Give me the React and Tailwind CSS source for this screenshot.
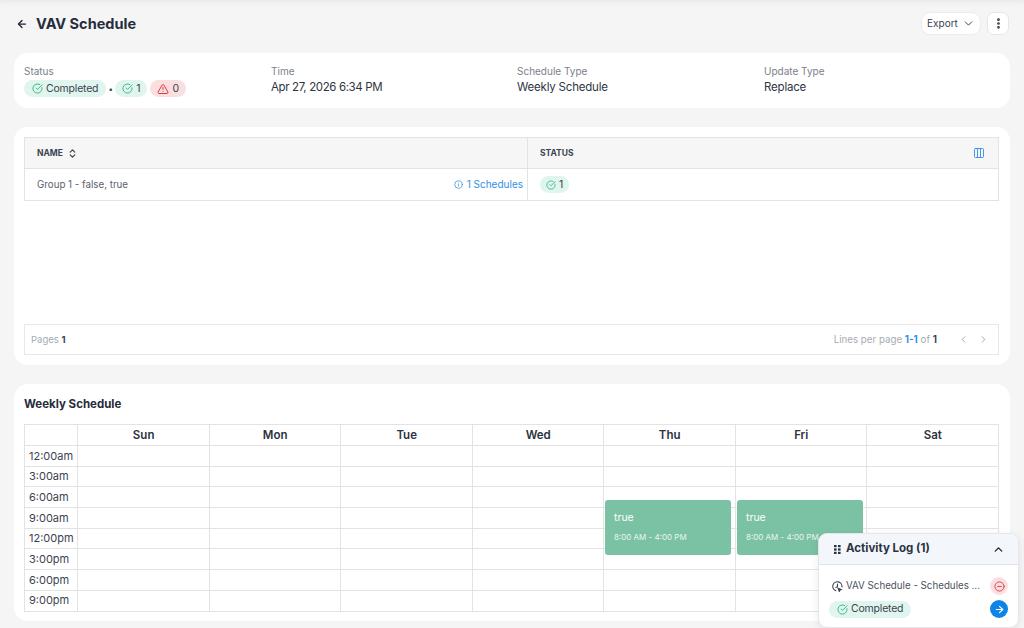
import { ArrowLeft, ArrowRight, ChevronDown, ChevronLeft, ChevronRight, ChevronUp, ChevronsUpDown, CircleCheckBig, Columns3, EllipsisVertical, Info, CircleMinus, TriangleAlert } from "lucide-react";

const days = ["Sun", "Mon", "Tue", "Wed", "Thu", "Fri", "Sat"];
const times = ["12:00am", "3:00am", "6:00am", "9:00am", "12:00pm", "3:00pm", "6:00pm", "9:00pm"];

function Pill({ red, className, children }) {
  const color = red ? "bg-[#fbdfe0]" : "bg-[#e0f5ee]";
  return (
    <span className={`flex h-[17px] items-center rounded-full text-[10.5px] tracking-[-0.2px] text-[#3a4350] ${color} ${className}`}>
      {children}
    </span>
  );
}

function Info2({ label, value, className, tight }) {
  return (
    <div className={className}>
      <p className="text-[10px] leading-[13px] text-[#7b818a]">{label}</p>
      <p className={`mt-[1px] text-[11.5px] leading-[17px] text-[#2f3642] ${tight ? "tracking-[-0.38px]" : "tracking-[-0.2px]"}`}>{value}</p>
    </div>
  );
}

function EventBlock({ className }) {
  return (
    <div className={`absolute top-[75px] z-10 h-[55px] rounded-[3px] bg-[#7bc2a5] pl-[9px] pt-[11px] text-white ${className}`}>
      <p className="text-[10.5px] leading-[13px]">true</p>
      <p className="mt-[7px] text-[8px] leading-[12px] text-[#e8f5ef]">8:00 AM - 4:00 PM</p>
    </div>
  );
}

function WeekGrid() {
  return (
    <div className="relative border-t border-l border-[#e3e3e3]">
      <div className="grid h-[21px] grid-cols-[53.4px_repeat(7,1fr)]">
        <div className="border-r border-b border-[#e3e3e3]" />
        {days.map((d) => (
          <div key={d} className="flex items-center justify-center border-r border-b border-[#e3e3e3] pt-[1px] text-[11.5px] font-semibold text-[#2c3340]">
            {d}
          </div>
        ))}
      </div>
      {times.map((t) => (
        <div key={t} className="grid h-[20.7px] grid-cols-[53.4px_repeat(7,1fr)]">
          <div className="flex items-center border-r border-b border-[#e3e3e3] pl-[4px] text-[11px] text-[#3c4350]">{t}</div>
          {days.map((d) => (
            <div key={d} className="border-r border-b border-[#e3e3e3]" />
          ))}
        </div>
      ))}
      <EventBlock className="left-[580px] w-[126px]" />
      <EventBlock className="left-[712px] w-[126px]" />
    </div>
  );
}

function GripIcon() {
  return (
    <svg viewBox="0 0 7 9" className="h-[9px] w-[7px] fill-[#2c3340]">
      <rect x="0" y="0" width="2.6" height="2.2" />
      <rect x="4" y="0" width="2.6" height="2.2" />
      <rect x="0" y="3.4" width="2.6" height="2.2" />
      <rect x="4" y="3.4" width="2.6" height="2.2" />
      <rect x="0" y="6.8" width="2.6" height="2.2" />
      <rect x="4" y="6.8" width="2.6" height="2.2" />
    </svg>
  );
}

function ClockTaskIcon() {
  return (
    <svg viewBox="0 0 12 12" fill="none" className="h-[11px] w-[11px] stroke-[#3a4350]" strokeWidth="1.2" strokeLinecap="round">
      <path d="M4.2 10.6A5 5 0 1 1 10.8 6.6" />
      <path d="M6 3.2V6L4.2 7.2" />
      <path d="M6.6 8l3.4 1.4-1.4.6-.6 1.4z" fill="#3a4350" />
    </svg>
  );
}

export default function App() {
  return (
    <div className="relative h-[628px] w-[1024px] overflow-hidden bg-[#f5f5f5] px-[14px] font-['Inter',sans-serif] shadow-[inset_0_6px_6px_-4px_rgba(0,0,0,0.06)]">
      <header className="flex h-[53px] items-center justify-between pb-[6px]">
        <div className="flex items-center gap-[8px]">
          <ArrowLeft className="ml-[2px] h-[12px] w-[12px] text-[#1f2633]" strokeWidth={2.5} />
          <h1 className="text-[14.5px] font-bold text-[#252c3c]">VAV Schedule</h1>
        </div>
        <div className="mr-[1px] flex items-center gap-[6px]">
          <button className="flex h-[23px] w-[60px] items-center justify-center gap-[4px] rounded-[9px] border border-[#ececec] bg-white text-[10px] text-[#3a4350]">
            Export
            <ChevronDown className="h-[13px] w-[13px]" strokeWidth={1.8} />
          </button>
          <button className="flex h-[23px] w-[22px] items-center justify-center rounded-[7px] border border-[#e6e6e6] bg-white text-[#2c3340]">
            <EllipsisVertical className="h-[13px] w-[13px]" strokeWidth={3} />
          </button>
        </div>
      </header>

      <section className="flex h-[55px] rounded-[14px] bg-white pl-[10px] pt-[12px]">
        <div className="w-[247px]">
          <p className="text-[10px] leading-[13px] text-[#7b818a]">Status</p>
          <div className="mt-[2px] flex items-center gap-[2px]">
            <Pill className="gap-[3px] px-[8px]">
              <CircleCheckBig className="h-[11px] w-[11px] text-[#33b583]" strokeWidth={2} />
              Completed
            </Pill>
            <span className="w-[5px] text-center text-[8px] text-[#3a4350]">•</span>
            <Pill className="gap-[3px] px-[7px]">
              <CircleCheckBig className="h-[11px] w-[11px] text-[#33b583]" strokeWidth={2} />1
            </Pill>
            <Pill red className="ml-[1px] gap-[3px] px-[7px]">
              <TriangleAlert className="h-[12px] w-[12px] text-[#dc3a42]" strokeWidth={2} />0
            </Pill>
          </div>
        </div>
        <Info2 label="Time" value="Apr 27, 2026 6:34 PM" className="w-[246px]" tight />
        <Info2 label="Schedule Type" value="Weekly Schedule" className="w-[247px]" />
        <Info2 label="Update Type" value="Replace" />
      </section>

      <section className="mt-[19px] h-[238px] rounded-[14px] bg-white pl-[10px] pr-[11px] pt-[10px]">
        <div className="border border-[#e3e3e3]">
          <div className="grid h-[30px] grid-cols-[503px_1fr] bg-[#f6f6f6]">
            <div className="flex items-center gap-[4px] border-r border-[#e3e3e3] pl-[12px] text-[8.5px] font-bold text-[#3a4350]">
              NAME
              <ChevronsUpDown className="h-[11px] w-[11px]" strokeWidth={2.6} />
            </div>
            <div className="flex items-center justify-between pl-[12px] pr-[13px] text-[8.5px] font-bold text-[#3a4350]">
              STATUS
              <Columns3 className="h-[12px] w-[12px] text-[#2f8fe6]" strokeWidth={1.8} />
            </div>
          </div>
          <div className="grid h-[32px] grid-cols-[503px_1fr] border-t border-[#e3e3e3]">
            <div className="flex items-center justify-between border-r border-[#e3e3e3] pl-[12px] pr-[4px]">
              <span className="pt-[1px] text-[9.75px] text-[#5a616b]">Group 1 - false, true</span>
              <span className="flex items-center gap-[4px] text-[10px] text-[#2f8fe6]">
                <Info className="h-[9px] w-[9px]" strokeWidth={2} />1 Schedules
              </span>
            </div>
            <div className="flex items-center pl-[12px]">
              <Pill className="gap-[3px] px-[6px]">
                <CircleCheckBig className="h-[10px] w-[10px] text-[#33b583]" strokeWidth={2} />1
              </Pill>
            </div>
          </div>
        </div>
        <div className="mt-[123px] flex h-[31px] items-center justify-between border border-[#e8e8e8] pl-[6px] pr-[9px]">
          <p className="pt-[1px] text-[9.5px] text-[#a6abb2]">
            Pages <span className="font-bold text-[#3a4350]">1</span>
          </p>
          <div className="flex items-center">
            <p className="pt-[1px] text-[9.75px] text-[#a6abb2]">
              Lines per page <span className="font-bold text-[#2f8fe6]">1-1</span> of <span className="font-bold text-[#3a4350]">1</span>
            </p>
            <ChevronLeft className="ml-[21px] h-[11px] w-[11px] text-[#9ba0a8]" strokeWidth={2} />
            <ChevronRight className="ml-[9px] h-[11px] w-[11px] text-[#9ba0a8]" strokeWidth={2} />
          </div>
        </div>
      </section>

      <section className="mt-[19px] h-[237px] rounded-[14px] bg-white pl-[10px] pr-[11px] pt-[13px]">
        <h2 className="h-[27px] text-[11.5px] leading-[14px] font-bold text-[#252c3c]">Weekly Schedule</h2>
        <WeekGrid />
      </section>

      <aside className="absolute top-[533px] right-[5px] z-20 h-[95px] w-[201px] overflow-hidden rounded-[9px] border border-[#e4e6ea] bg-white shadow-[0_2px_8px_rgba(0,0,0,0.08)]">
        <div className="flex h-[31px] items-center justify-between border-b border-[#dfe2e8] bg-[#f3f7fc] pl-[15px] pr-[13px]">
          <div className="flex items-center gap-[5px]">
            <GripIcon />
            <span className="text-[11.5px] font-bold text-[#2c3340]">Activity Log (1)</span>
          </div>
          <ChevronUp className="h-[13px] w-[13px] text-[#1f2633]" strokeWidth={2.5} />
        </div>
        <div className="pl-[10px] pr-[10px] pt-[12px]">
          <div className="flex items-center justify-between">
            <div className="flex items-center gap-[3px] pl-[3px]">
              <ClockTaskIcon />
              <span className="whitespace-nowrap text-[9.75px] text-[#4a515c]">VAV Schedule - Schedules ...</span>
            </div>
            <span className="flex h-[18px] w-[18px] items-center justify-center rounded-full bg-[#fbdfe0]">
              <CircleMinus className="h-[11px] w-[11px] text-[#dc3a42]" strokeWidth={2} />
            </span>
          </div>
          <div className="mt-[5px] flex items-center justify-between">
            <Pill className="gap-[3px] px-[8px]">
              <CircleCheckBig className="h-[11px] w-[11px] text-[#33b583]" strokeWidth={2} />
              Completed
            </Pill>
            <span className="flex h-[18px] w-[18px] items-center justify-center rounded-full bg-[#0f84e8]">
              <ArrowRight className="h-[11px] w-[11px] text-white" strokeWidth={2.5} />
            </span>
          </div>
        </div>
      </aside>
    </div>
  );
}
